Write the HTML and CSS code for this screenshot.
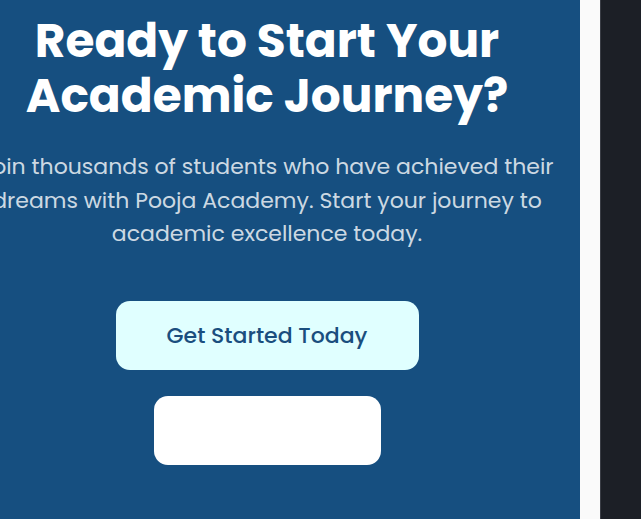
FILE: index.html
```html
<!DOCTYPE html>
<html lang="en">
<head>
<meta charset="utf-8">
<title>Pooja Academy</title>
<link rel="stylesheet" href="styles.css">
</head>
<body>
<div class="page">
  <section class="cta">
    <h1 class="cta-title">Ready to Start Your<br>Academic Journey?</h1>
    <p class="cta-text">Join thousands of students who have achieved their dreams with Pooja Academy. Start your journey to academic excellence today.</p>
    <div class="cta-actions">
      <a class="btn btn-primary" href="#">Get Started Today</a>
      <a class="btn btn-secondary" href="#" aria-label="Contact us"></a>
    </div>
  </section>
  <div class="gutter"></div>
  <div class="side"></div>
</div>
</body>
</html>
```
FILE: styles.css
```css
html, body {
  margin: 0;
  padding: 0;
  height: 100%;
  overflow: hidden;
}
body {
  font-family: "Poppins", "Inter", "Liberation Sans", sans-serif;
  background: #1c1f26;
}
.page {
  display: flex;
  height: 519px;
  overflow: hidden;
}
.cta {
  flex: 0 0 626px;
  margin-left: -46px;
  background: #164f80;
  display: flex;
  flex-direction: column;
  align-items: center;
  text-align: center;
  padding-top: 13px;
  box-sizing: border-box;
}
.cta-title {
  margin: 0;
  color: #ffffff;
  font-size: 47px;
  font-weight: 700;
  line-height: 55px;
}
.cta-text {
  margin: 27px 0 0;
  width: 600px;
  color: rgba(255, 255, 255, 0.8);
  font-size: 22px;
  line-height: 33.5px;
}
.cta-actions {
  margin-top: 50px;
  display: flex;
  flex-direction: column;
  align-items: center;
  gap: 26px;
}
.btn {
  display: block;
  box-sizing: border-box;
  height: 69px;
  border-radius: 14px;
  text-decoration: none;
  font-size: 22px;
  font-weight: 500;
  line-height: 69px;
}
.btn-primary {
  width: 303px;
  background: #e0ffff;
  color: #1a4e7e;
}
.btn-secondary {
  width: 227px;
  background: #ffffff;
}
.gutter {
  flex: 0 0 20px;
  background: #fafafa;
}
.side {
  flex: 1;
  background: #1c1f26;
  border-left: 1px solid #3a3d45;
}
```
